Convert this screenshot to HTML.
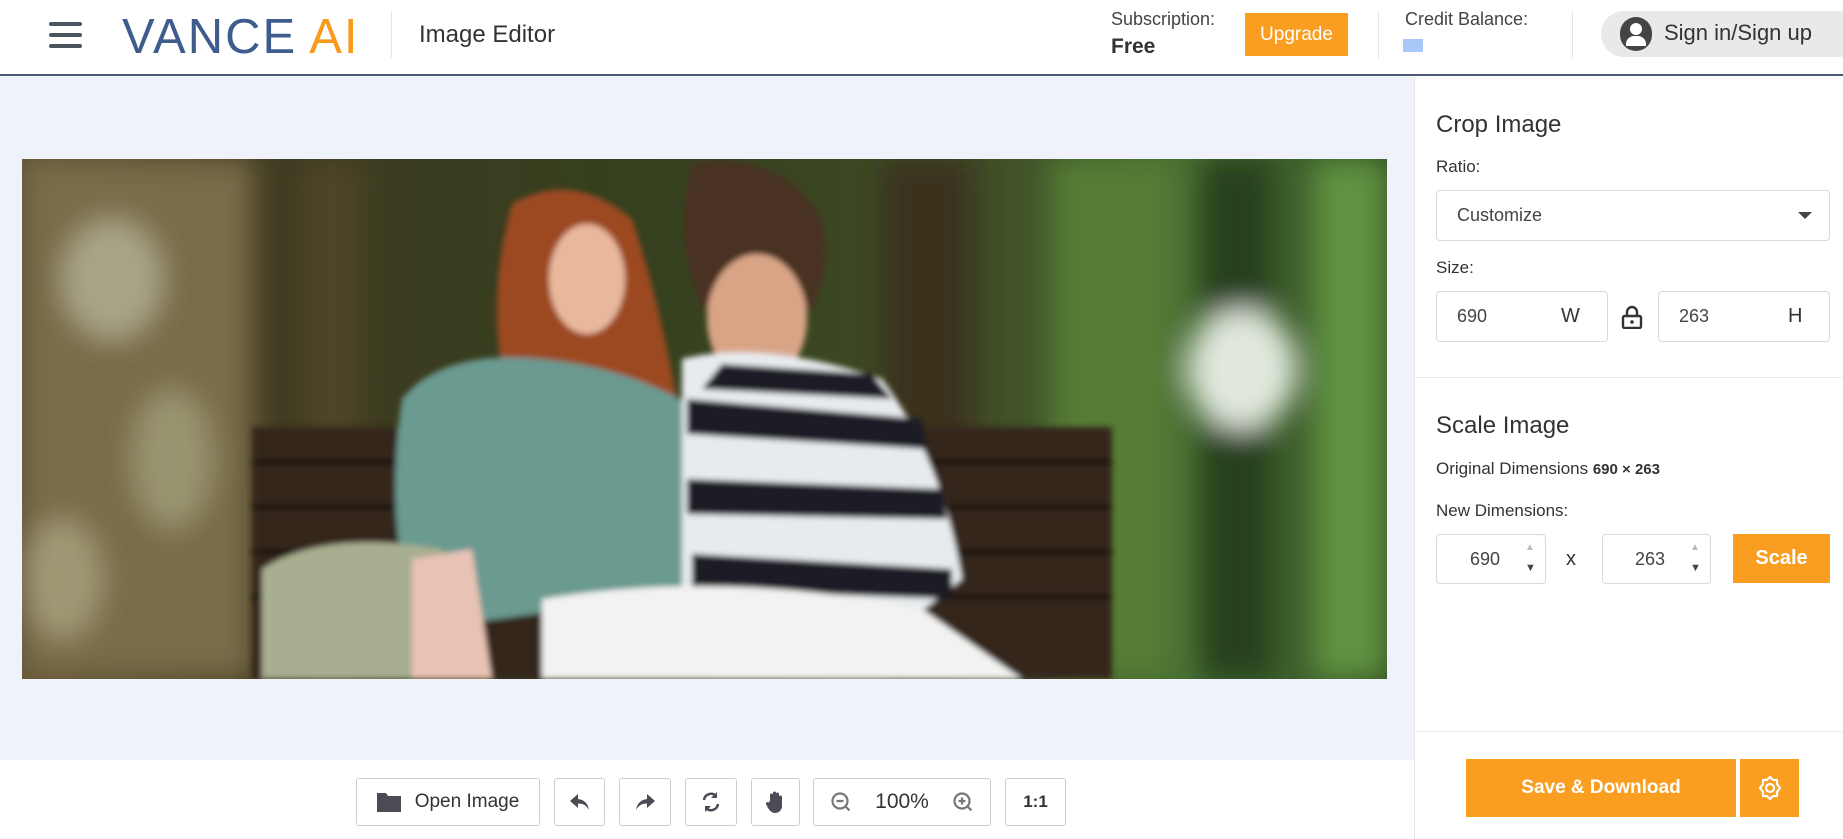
<!DOCTYPE html>
<html><head><meta charset="utf-8"><style>
*{box-sizing:border-box;margin:0;padding:0}
body{width:1843px;height:839px;position:relative;overflow:hidden;background:#fff;font-family:"Liberation Sans",sans-serif;color:#333}
.a{position:absolute}
.hdr{left:0;top:0;width:1843px;height:76px;background:#fff;border-bottom:2px solid #4a5a7a}
.canvas{left:0;top:77px;width:1414px;height:683px;background:#eff2fa}
.side{left:1414px;top:77px;width:429px;height:762px;border-left:1px solid #e6e6e6;background:#fff}
.box{border:1px solid #d9d9d9;border-radius:4px;background:#fff}
.tb{top:778px;height:48px;border:1px solid #c9ced6;border-radius:3px;background:#fff;display:flex;align-items:center;justify-content:center}
.orange{background:#fa9e22;color:#fff}
.lbl{font-size:17px;color:#333}
</style></head><body>
<div class="a hdr"></div>
<div class="a" style="left:49px;top:22px;width:33px;height:4px;background:#4b5560;border-radius:2px"></div>
<div class="a" style="left:49px;top:33px;width:33px;height:4px;background:#4b5560;border-radius:2px"></div>
<div class="a" style="left:49px;top:44px;width:33px;height:4px;background:#4b5560;border-radius:2px"></div>
<div class="a" style="left:122px;top:12px;font-size:49px;letter-spacing:2px;color:#3f5d8c;line-height:50px">VANCE<span style="color:#f89a1c;margin-left:12px">AI</span></div>
<div class="a" style="left:391px;top:11px;width:1px;height:47px;background:#e5e5e5"></div>
<div class="a" style="left:419px;top:21px;font-size:24px;color:#333">Image Editor</div>
<div class="a" style="left:1111px;top:9px;font-size:18px;color:#444">Subscription:</div>
<div class="a" style="left:1111px;top:35px;font-size:21px;font-weight:bold;color:#333">Free</div>
<div class="a orange" style="left:1245px;top:13px;width:103px;height:43px;font-size:19px;display:flex;align-items:center;justify-content:center">Upgrade</div>
<div class="a" style="left:1378px;top:11px;width:1px;height:47px;background:#e5e5e5"></div>
<div class="a" style="left:1405px;top:9px;font-size:18px;color:#444">Credit Balance:</div>
<div class="a" style="left:1403px;top:39px;width:20px;height:13px;background:#a8c8fa"></div>
<div class="a" style="left:1572px;top:11px;width:1px;height:47px;background:#e5e5e5"></div>
<div class="a" style="left:1601px;top:11px;width:260px;height:46px;border-radius:23px;background:#e9e9e9"></div>
<div class="a" style="left:1620px;top:17px;width:32px;height:34px;border-radius:16px;background:#454545;overflow:hidden"><div class="a" style="left:10px;top:6px;width:12px;height:12px;border-radius:6px;background:#fff"></div><div class="a" style="left:6px;top:19px;width:20px;height:10px;border-radius:8px 8px 0 0;background:#fff"></div></div>
<div class="a" style="left:1664px;top:20px;font-size:22px;color:#333">Sign in/Sign up</div>

<div class="a canvas"></div>
<svg class="a" style="left:22px;top:159px" width="1365" height="520" viewBox="0 0 1365 520">
<defs><filter id="b"><feGaussianBlur stdDeviation="14"/></filter><filter id="s"><feGaussianBlur stdDeviation="3"/></filter>
<linearGradient id="bg" x1="0" x2="1"><stop offset="0" stop-color="#5e5232"/><stop offset=".2" stop-color="#3e3a20"/><stop offset=".45" stop-color="#34401e"/><stop offset=".7" stop-color="#404c26"/><stop offset=".85" stop-color="#466e32"/><stop offset="1" stop-color="#344f24"/></linearGradient></defs>
<rect width="1365" height="520" fill="url(#bg)"/>
<g filter="url(#b)">
<rect x="0" y="0" width="230" height="520" fill="#7a6c48"/>
<ellipse cx="90" cy="120" rx="50" ry="60" fill="#a8a586"/><ellipse cx="150" cy="300" rx="40" ry="70" fill="#99946f"/><ellipse cx="40" cy="420" rx="40" ry="60" fill="#a09874"/>
<rect x="280" y="0" width="60" height="520" fill="#4e4428"/><rect x="860" y="0" width="90" height="520" fill="#3a321c"/>
<rect x="1030" y="0" width="120" height="520" fill="#557d36"/><rect x="1180" y="0" width="70" height="520" fill="#263f1a"/>
<ellipse cx="1220" cy="210" rx="55" ry="60" fill="#e0e8dc"/>
<rect x="1290" y="0" width="75" height="520" fill="#5e9240"/>
</g>
<g filter="url(#s)">
<rect x="230" y="268" width="860" height="252" fill="#35251f"/>
<rect x="230" y="300" width="860" height="6" fill="#1e130c"/><rect x="230" y="345" width="860" height="6" fill="#1e130c"/><rect x="230" y="390" width="860" height="6" fill="#1e130c"/><rect x="230" y="435" width="860" height="6" fill="#1e130c"/>
<path d="M490 45 Q550 10 610 60 Q640 150 660 270 L490 260 Q460 150 490 45Z" fill="#9c4a22"/>
<ellipse cx="565" cy="120" rx="38" ry="55" fill="#e9b89c"/>
<path d="M380 240 Q420 190 520 200 Q620 210 690 260 L700 430 L400 470 Q360 380 380 240Z" fill="#6b9a90"/>
<path d="M240 410 Q300 370 420 390 L430 520 L240 520Z" fill="#a8ae90"/>
<path d="M390 400 L450 390 L470 520 L390 520Z" fill="#e8c2b4"/>
<path d="M670 5 Q760 -10 800 60 Q810 110 790 150 L680 150 Q650 80 670 5Z" fill="#4a3224"/>
<ellipse cx="735" cy="160" rx="50" ry="65" fill="#d9a486"/>
<path d="M660 200 Q740 180 860 220 Q920 300 940 420 L890 460 L660 470Z" fill="#e7ebee"/>
<path d="M665 240 L900 260 L905 290 L665 275Z M665 320 L920 330 L925 360 L665 355Z M670 395 L930 410 L930 440 L670 430Z M700 205 L850 215 L870 240 L680 230Z" fill="#1a1f28"/>
<path d="M520 440 Q700 410 900 450 L1000 520 L520 520Z" fill="#f2f2f0"/>
</g>
</svg>

<div class="a side"></div>
<div class="a" style="left:1436px;top:111px;font-size:24px;color:#333">Crop Image</div>
<div class="a lbl" style="left:1436px;top:157px">Ratio:</div>
<div class="a box" style="left:1436px;top:190px;width:394px;height:51px"></div>
<div class="a" style="left:1457px;top:205px;font-size:18px;color:#444">Customize</div>
<div class="a" style="left:1798px;top:212px;width:0;height:0;border-left:7px solid transparent;border-right:7px solid transparent;border-top:7px solid #444"></div>
<div class="a lbl" style="left:1436px;top:258px">Size:</div>
<div class="a box" style="left:1436px;top:291px;width:172px;height:51px"></div>
<div class="a" style="left:1457px;top:306px;font-size:18px;color:#444">690</div>
<div class="a" style="left:1561px;top:305px;font-size:20px;color:#333">W</div>
<svg class="a" style="left:1621px;top:305px" width="22" height="24" viewBox="0 0 22 24"><path d="M6 11V7a5 5 0 0 1 10 0v4" fill="none" stroke="#333" stroke-width="2.4"/><rect x="2" y="11" width="18" height="12" rx="1.5" fill="none" stroke="#333" stroke-width="2.4"/><circle cx="11" cy="17" r="1.8" fill="#333"/></svg>
<div class="a box" style="left:1658px;top:291px;width:172px;height:51px"></div>
<div class="a" style="left:1679px;top:306px;font-size:18px;color:#444">263</div>
<div class="a" style="left:1788px;top:305px;font-size:20px;color:#333">H</div>
<div class="a" style="left:1415px;top:377px;width:428px;height:1px;background:#eaeaea"></div>
<div class="a" style="left:1436px;top:412px;font-size:24px;color:#333">Scale Image</div>
<div class="a" style="left:1436px;top:459px;font-size:17px;color:#333">Original Dimensions <b style="font-size:15px">690 × 263</b></div>
<div class="a lbl" style="left:1436px;top:501px">New Dimensions:</div>
<div class="a box" style="left:1436px;top:534px;width:110px;height:50px"></div>
<div class="a" style="left:1470px;top:549px;font-size:18px;color:#444">690</div>
<div class="a" style="left:1525px;top:542px;font-size:10px;color:#bbb">▲</div><div class="a" style="left:1525px;top:562px;font-size:11px;color:#444">▼</div>
<div class="a" style="left:1566px;top:548px;font-size:20px;color:#333">x</div>
<div class="a box" style="left:1602px;top:534px;width:109px;height:50px"></div>
<div class="a" style="left:1635px;top:549px;font-size:18px;color:#444">263</div>
<div class="a" style="left:1690px;top:542px;font-size:10px;color:#bbb">▲</div><div class="a" style="left:1690px;top:562px;font-size:11px;color:#444">▼</div>
<div class="a orange" style="left:1733px;top:534px;width:97px;height:49px;font-size:20px;font-weight:bold;display:flex;align-items:center;justify-content:center">Scale</div>
<div class="a" style="left:1415px;top:731px;width:428px;height:1px;background:#eaeaea"></div>
<div class="a orange" style="left:1466px;top:759px;width:270px;height:58px;font-size:19px;font-weight:bold;display:flex;align-items:center;justify-content:center">Save &amp; Download</div>
<div class="a orange" style="left:1740px;top:759px;width:59px;height:58px;display:flex;align-items:center;justify-content:center"><svg width="28" height="28" viewBox="0 0 28 28"><path d="M14 3l3 3h4v4l3 4-3 4v4h-4l-3 3-3-3H7v-4l-3-4 3-4V6h4z" fill="none" stroke="#fff" stroke-width="2.2" stroke-linejoin="round"/><circle cx="14" cy="14" r="4" fill="none" stroke="#fff" stroke-width="2.2"/></svg></div>

<div class="a tb" style="left:356px;width:184px"><svg width="24" height="20" viewBox="0 0 24 20"><path d="M0 1h9l2 3h13v16H0z" fill="#4b4b55"/></svg><span style="font-size:19px;color:#333;margin-left:14px">Open Image</span></div>
<div class="a tb" style="left:554px;width:51px"><svg width="20" height="16" viewBox="0 0 20 16"><path d="M8 0L0 7l8 7V9.5c5 0 8 1.5 11 6.5-1-6-4-10-11-11z" fill="#4b4b55"/></svg></div>
<div class="a tb" style="left:619px;width:52px"><svg width="20" height="16" viewBox="0 0 20 16"><path d="M12 0l8 7-8 7V9.5C7 9.5 4 11 1 16c1-6 4-10 11-11z" fill="#4b4b55"/></svg></div>
<div class="a tb" style="left:685px;width:52px"><svg width="20" height="22" viewBox="0 0 20 22"><path d="M3 9a7 7 0 0 1 12-4M17 13a7 7 0 0 1-12 4" fill="none" stroke="#4b4b55" stroke-width="2.5"/><path d="M16 1v6h-6z M4 21v-6h6z" fill="#4b4b55"/></svg></div>
<div class="a tb" style="left:751px;width:49px"><svg width="20" height="22" viewBox="0 0 20 22"><path d="M4 10V4a1.5 1.5 0 0 1 3 0v5V2a1.5 1.5 0 0 1 3 0v7V3a1.5 1.5 0 0 1 3 0v7V6a1.5 1.5 0 0 1 3 0v9c0 4-3 7-7 7-3 0-5-2-7-5l-2-4a1.5 1.5 0 0 1 2.5-1.5z" fill="#4b4b55"/></svg></div>
<div class="a tb" style="left:813px;width:178px;justify-content:space-between;padding:0 16px"><svg width="22" height="22" viewBox="0 0 22 22"><circle cx="10" cy="10" r="7.5" fill="none" stroke="#777" stroke-width="2.2"/><path d="M6.5 10h7M15.5 15.5l4 4" stroke="#777" stroke-width="2.2"/></svg><span style="font-size:21px;color:#333">100%</span><svg width="22" height="22" viewBox="0 0 22 22"><circle cx="10" cy="10" r="7.5" fill="none" stroke="#777" stroke-width="2.2"/><path d="M6.5 10h7M10 6.5v7M15.5 15.5l4 4" stroke="#777" stroke-width="2.2"/></svg></div>
<div class="a tb" style="left:1005px;width:61px;font-size:17px;font-weight:bold;color:#333">1:1</div>
</body></html>
